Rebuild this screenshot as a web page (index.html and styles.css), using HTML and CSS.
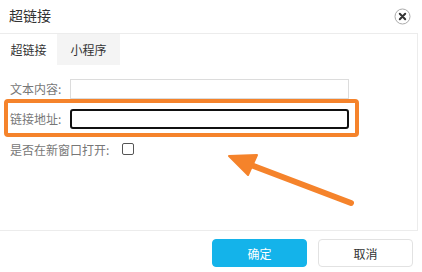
FILE: index.html
```html
<!DOCTYPE html>
<html lang="zh">
<head>
<meta charset="utf-8">
<link rel="stylesheet" href="styles.css">
</head>
<body>
<div class="dialog">
  <div class="header">
    <span class="title">超链接</span>
    <span class="close">
      <svg width="17" height="17" viewBox="0 0 17 17"><circle cx="8.5" cy="8.5" r="7.5" fill="#fff" stroke="#aaa" stroke-width="1"/><path d="M5.8 5.8 L11.2 11.2 M11.2 5.8 L5.8 11.2" stroke="#333" stroke-width="2" stroke-linecap="round"/></svg>
    </span>
  </div>
  <div class="content">
    <div class="tabs">
      <div class="tab active">超链接</div>
      <div class="tab">小程序</div>
    </div>
    <div class="form">
      <div class="row">
        <label class="label">文本内容:</label>
        <div class="input"></div>
      </div>
      <div class="row row2">
        <label class="label">链接地址:</label>
        <div class="input focus"></div>
      </div>
      <div class="row row3">
        <label class="label">是否在新窗口打开:</label>
        <span class="check"></span>
      </div>
    </div>
  </div>
  <div class="footer">
    <button class="btn primary">确定</button>
    <button class="btn">取消</button>
  </div>
</div>
<div class="highlight"></div>
<svg class="arrow" width="422" height="272" viewBox="0 0 422 272">
  <line x1="351" y1="203" x2="243" y2="162" stroke="#f5832b" stroke-width="6" stroke-linecap="round"/>
  <polygon points="229,156 257,155 248,175" fill="#f5832b" stroke="#f5832b" stroke-width="2" stroke-linejoin="round"/>
</svg>
</body>
</html>
```

FILE: styles.css
```css
html, body {
  margin: 0;
  padding: 0;
  background: #fff;
}
body {
  width: 422px;
  height: 272px;
  overflow: hidden;
  font-family: "Noto Sans CJK SC", "Noto Sans", sans-serif;
  font-size: 12px;
  color: #666;
}
.dialog {
  width: 422px;
}
.header {
  height: 34px;
  box-sizing: border-box;
  border-bottom: 1px solid #ececec;
  width: 418px;
  display: flex;
  align-items: center;
  justify-content: space-between;
  padding: 0 8px 0 9px;
}
.title {
  font-size: 14px;
  color: #333;
  line-height: 16px;
  margin-top: -4px;
}
.close {
  display: flex;
  margin-top: -1px;
  margin-right: -1px;
}
.content {
  width: 418px;
  height: 197px;
  box-sizing: border-box;
  border-right: 1px solid #ececec;
  border-bottom: 1px solid #ececec;
}
.tabs {
  display: flex;
  height: 31px;
}
.tab {
  height: 31px;
  line-height: 32px;
  text-align: center;
  color: #333;
  background: #f4f4f4;
  width: 63px;
}
.tab.active {
  background: #fff;
  width: 57px;
}
.form {
  padding: 14px 0 0 10px;
}
.row {
  display: flex;
  align-items: center;
  height: 20px;
}
.row2 {
  margin-top: 10px;
}
.row3 {
  margin-top: 13px;
  height: 16px;
}
.label {
  width: 60px;
  color: #777;
  line-height: 16px;
  white-space: nowrap;
}
.input {
  width: 279px;
  height: 20px;
  box-sizing: border-box;
  border: 1px solid #dcdcdc;
  background: #fff;
}
.input.focus {
  border: 2px solid #111;
  border-radius: 3px;
}
.check {
  width: 12px;
  height: 12px;
  box-sizing: border-box;
  border: 1px solid #555;
  border-radius: 2px;
  margin-left: 52px;
  margin-top: -3px;
}
.footer {
  width: 418px;
  display: flex;
  justify-content: flex-end;
  gap: 11px;
  padding-top: 8px;
  padding-right: 5px;
  box-sizing: border-box;
}
.btn {
  width: 95px;
  height: 28px;
  box-sizing: border-box;
  border: 1px solid #e2e2e2;
  border-radius: 4px;
  background: #fff;
  color: #333;
  font-family: "Noto Sans CJK SC", "Noto Sans", sans-serif;
  font-size: 12px;
  padding: 0;
}
.btn.primary {
  background: #14b3ea;
  border-color: #14b3ea;
  color: #fff;
}
.highlight {
  position: absolute;
  left: 4px;
  top: 99px;
  width: 355px;
  height: 38px;
  box-sizing: border-box;
  border: 4px solid #f5832b;
  border-radius: 4px;
}
.arrow {
  position: absolute;
  left: 0;
  top: 0;
  pointer-events: none;
}
```
